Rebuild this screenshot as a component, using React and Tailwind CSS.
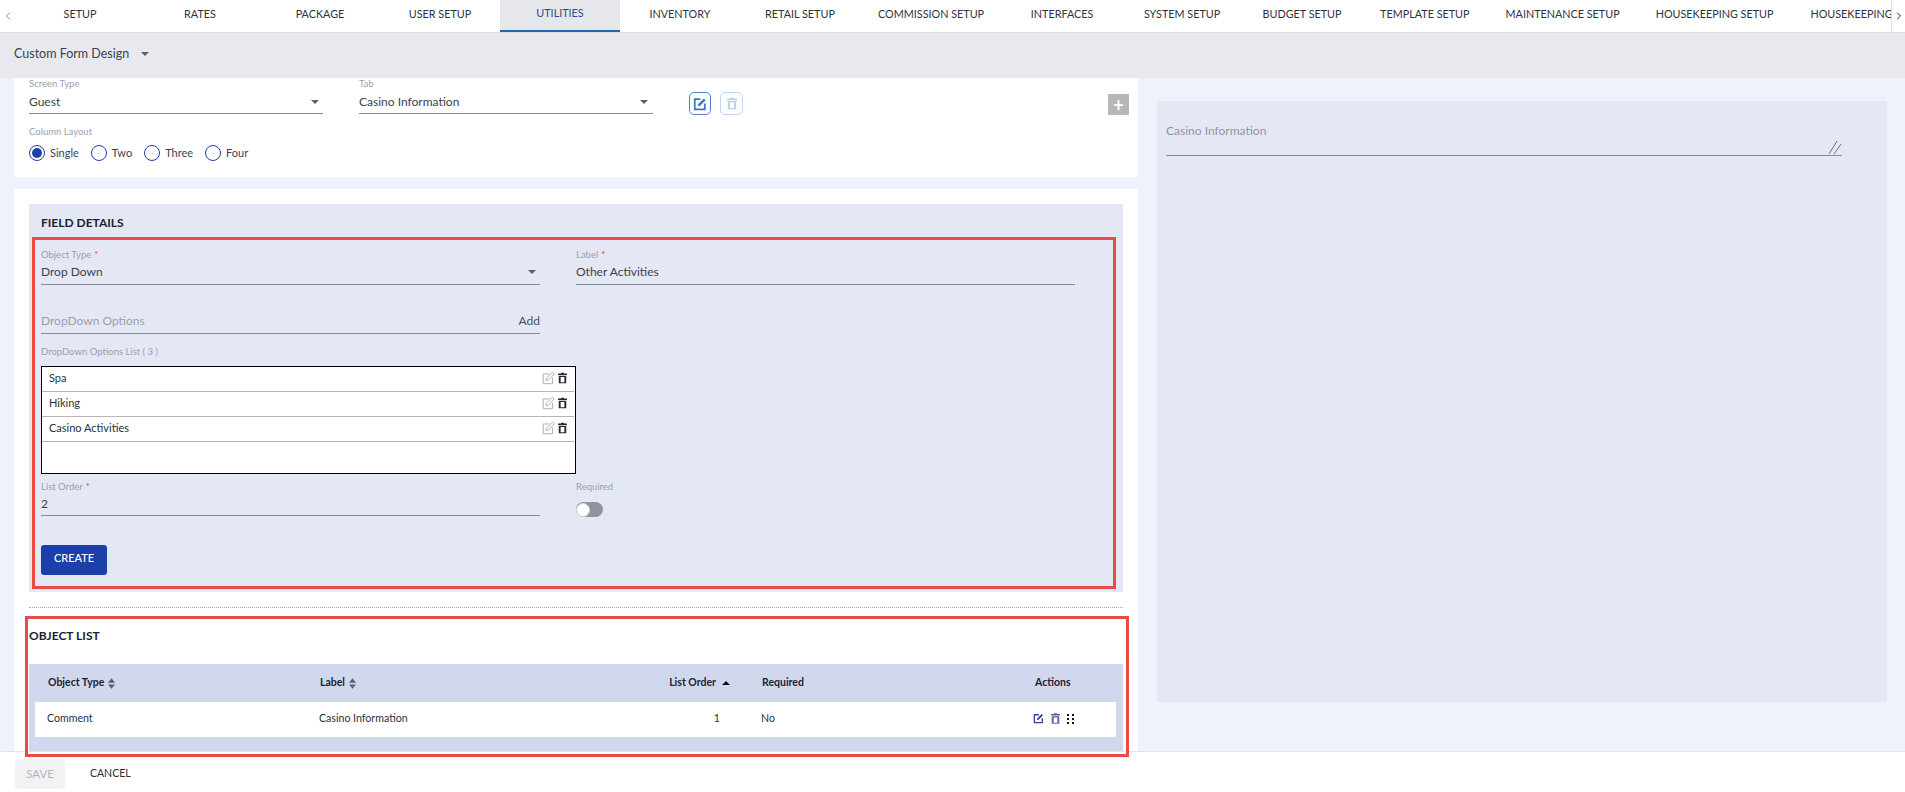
import React from 'react';
import { ChevronLeft, ChevronRight } from 'lucide-react';

const tabs = ['Setup', 'Rates', 'Package', 'User Setup', 'Utilities', 'Inventory', 'Retail Setup', 'Commission Setup', 'Interfaces', 'System Setup', 'Budget Setup', 'Template Setup', 'Maintenance Setup', 'Housekeeping Setup', 'Housekeeping'];

const Caret = ({ className }) => (
  <svg viewBox="0 0 10 5" className={className} fill="currentColor"><path d="M0 0h10L5 5z" /></svg>
);

const SortIcon = () => (
  <svg viewBox="0 0 8 12" className="w-[7px] h-[11px] text-[#5a6072]" fill="currentColor">
    <path d="M4 0l4 5H0zM0 7h8l-4 5z" />
  </svg>
);

// square with a pen, used in the action buttons
const EditSolid = ({ className }) => (
  <svg viewBox="0 0 16 16" className={className} fill="none">
    <path d="M8.5 2.5H2v11.5h11.5V7.5" stroke="currentColor" strokeWidth="2" />
    <path d="M5.5 10.5l.6-2.6L12.4 1.6l2 2-6.3 6.3z" fill="currentColor" />
  </svg>
);

const EditThin = () => (
  <svg viewBox="0 0 16 16" className="w-[13px] h-[14px] text-[#9a9dad]" fill="none" stroke="currentColor" strokeWidth="1">
    <path d="M9 3H1.5v12H13V7.5" />
    <path d="M5 11l.6-3L13 .8l2.2 2.2L8 10.4z" />
  </svg>
);

const Trash = ({ className }) => (
  <svg viewBox="0 0 12 14" className={className} fill="currentColor">
    <path d="M4 0h4v1h4v2H0V1h4z" />
    <path fillRule="evenodd" d="M1 4h10v10H1zM3.5 5.5v7h5v-7z" />
  </svg>
);

const Grip = () => (
  <svg viewBox="0 0 7 10" className="w-[7px] h-[10px] text-[#111]" fill="currentColor">
    <path d="M0 0h2v2H0zM5 0h2v2H5zM0 4h2v2H0zM5 4h2v2H5zM0 8h2v2H0zM5 8h2v2H5z" />
  </svg>
);

const Radio = ({ label, checked }) => (
  <label className="flex items-center gap-[5px] text-[11px] text-[#3c4150]">
    <span className="w-4 h-4 rounded-full border border-[#1c3faa] flex items-center justify-center">
      {checked ? (
        <span className="w-[10px] h-[10px] rounded-full bg-[#1c3faa]" />
      ) : (
        <span className="w-[1px] h-[1px] rounded-full bg-[#8a94c4]" />
      )}
    </span>
    {label}
  </label>
);

const FieldLabel = ({ children, required }) => (
  <div className="h-3 text-[9.5px] leading-3 text-[#9a9fb0]">
    {children}
    {required && <span className="text-[#e5484d] ml-[3px]">*</span>}
  </div>
);

const optionRows = ['Spa', 'Hiking', 'Casino Activities'];

const tableCols = 'grid grid-cols-[284px_321px_106px_287px_1fr] items-center';

export default function App() {
  return (
    <div className="relative h-[792px] w-[1905px] overflow-hidden flex flex-col bg-[#eff2fa] font-['Lato',sans-serif]">
      {/* Tabs */}
      <div className="h-[33px] shrink-0 bg-white border-b border-[#dcdde1] flex">
        <div className="w-5 shrink-0 flex items-center justify-center pr-[4px] text-[#8a8a8a]">
          <ChevronLeft size={12} />
        </div>
        <div className="flex-1 min-w-0 flex overflow-hidden">
          {tabs.map((t) => (
            <div
              key={t}
              className={
                t === 'Utilities'
                  ? 'shrink-0 min-w-[120px] px-[18px] h-[32px] flex items-center justify-center uppercase text-[10.8px] pb-[3px] text-[#2a4d8f] bg-[#e6e7eb] border-b-2 border-[#2f62ad] whitespace-nowrap'
                  : 'shrink-0 min-w-[120px] px-[18px] h-[32px] flex items-center justify-center uppercase text-[10.8px] pb-[3px] text-[#2f3340] whitespace-nowrap'
              }
            >
              {t}
            </div>
          ))}
        </div>
        <div className="w-[14px] shrink-0 bg-white border-l border-[#dcdde1] flex items-center justify-center text-[#222]">
          <ChevronRight size={12} />
        </div>
      </div>

      {/* Sub header */}
      <div className="h-[45px] shrink-0 bg-[#e8e9ee] flex items-center pl-[14px] pb-[3px]">
        <span className="text-[12.5px] text-[#3c4150]">Custom Form Design</span>
        <Caret className="w-2 h-1 ml-[12px] text-[#5a5f6b]" />
      </div>

      {/* Content */}
      <div className="flex-1 min-h-0 flex pl-[14px]">
        <div className="w-[1124px] shrink-0 flex flex-col">
          {/* Screen settings */}
          <div className="h-[99px] shrink-0 bg-white pl-[15px] pr-[9px]">
            <div className="flex items-start h-[36px]">
              <div className="w-[294px]">
                <FieldLabel>Screen Type</FieldLabel>
                <div className="h-[24px] border-b border-[#8a8d99] flex items-center justify-between pr-1 text-[12px] text-[#3c4150]">
                  Guest
                  <Caret className="w-2 h-1 text-[#5a5f6b]" />
                </div>
              </div>
              <div className="w-[294px] ml-[36px]">
                <FieldLabel>Tab</FieldLabel>
                <div className="h-[24px] border-b border-[#8a8d99] flex items-center justify-between pr-[5px] text-[12px] text-[#3c4150]">
                  Casino Information
                  <Caret className="w-2 h-1 text-[#5a5f6b]" />
                </div>
              </div>
              <button className="ml-[36px] mt-[14px] w-[22px] h-[23px] rounded-[5px] border border-[#4f80c9] flex items-center justify-center text-[#3f73c4]">
                <EditSolid className="w-[14px] h-[14px]" />
              </button>
              <button className="ml-[9px] mt-[14px] w-[23px] h-[23px] rounded-[5px] border border-[#c3d4ee] flex items-center justify-center text-[#bcd0ec]">
                <Trash className="w-[10px] h-[13px]" />
              </button>
              <button className="ml-auto mt-[16px] w-[21px] h-[21px] bg-[#b7b7b7] text-white text-[18px] font-bold leading-none flex items-center justify-center">
                +
              </button>
            </div>
            <div className="mt-[12px]">
              <FieldLabel>Column Layout</FieldLabel>
              <div className="flex items-center gap-[12px] mt-[7px]">
                <Radio label="Single" checked />
                <Radio label="Two" />
                <Radio label="Three" />
                <Radio label="Four" />
              </div>
            </div>
          </div>

          {/* Details card */}
          <div className="flex-1 min-h-0 mt-3 bg-white px-[15px] pt-[15px] flex flex-col">
            <div className="relative h-[388px] shrink-0 bg-[#e4e8f4] pl-3 pt-3">
              <div className="h-[14px] text-[12px] leading-[14px] font-bold text-[#1d2230]">FIELD DETAILS</div>

              <div className="mt-[19px] flex gap-[36px]">
                <div className="w-[499px]">
                  <FieldLabel required>Object Type</FieldLabel>
                  <div className="h-6 border-b border-[#8a8d99] flex items-center justify-between pr-1 pb-[2px] text-[12px] text-[#3c4150]">
                    Drop Down
                    <Caret className="w-2 h-1 text-[#5a5f6b]" />
                  </div>
                </div>
                <div className="w-[499px]">
                  <FieldLabel required>Label</FieldLabel>
                  <div className="h-6 border-b border-[#8a8d99] flex items-center pb-[2px] text-[12px] text-[#3c4150]">
                    Other Activities
                  </div>
                </div>
              </div>

              <div className="mt-6 w-[499px] h-[25px] border-b border-[#8a8d99] flex items-center justify-between text-[12px]">
                <span className="text-[#9a9fb0]">DropDown Options</span>
                <span className="text-[#4a4f5c]">Add</span>
              </div>

              <div className="mt-3">
                <FieldLabel>DropDown Options List ( 3 )</FieldLabel>
              </div>
              <div className="mt-2 w-[535px] h-[108px] border border-black bg-white pr-[1px]">
                {optionRows.map((o) => (
                  <div key={o} className="h-[25px] border-b border-[#b5b6ba] pl-[7px] pr-[7px] pb-[2px] flex items-center justify-between text-[11px] text-[#2b2f3a]">
                    {o}
                    <span className="flex items-center gap-[3px]">
                      <EditThin />
                      <Trash className="w-[9px] h-[12px] text-[#262a38]" />
                    </span>
                  </div>
                ))}
              </div>

              <div className="mt-[7px] flex gap-[36px]">
                <div className="w-[499px]">
                  <FieldLabel required>List Order</FieldLabel>
                  <div className="h-[23px] border-b border-[#8a8d99] flex items-center text-[12px] text-[#3c4150]">2</div>
                </div>
                <div>
                  <FieldLabel>Required</FieldLabel>
                  <div className="mt-[9px] w-[27px] h-[15px] rounded-full bg-[#90949f] flex items-center">
                    <span className="w-[14px] h-[14px] rounded-full bg-white border border-[#d5d6da]" />
                  </div>
                </div>
              </div>

              <button className="mt-[28px] w-[66px] h-[30px] rounded-[3px] bg-[#1c3faa] text-white text-[11px] font-medium flex items-center justify-center pb-[3px]">
                CREATE
              </button>

              {/* red annotation */}
              <div className="absolute top-[33px] left-[3px] right-[7px] bottom-[3px] border-[3px] border-[#ec4a44] pointer-events-none" />
            </div>

            <div className="mt-[15px] border-t border-dotted border-[#a8a8a8]" />

            <div className="relative flex-1 min-h-0">
              <div className="mt-[21px] h-[14px] text-[12px] leading-[14px] font-bold text-[#1d2230]">OBJECT LIST</div>

              <div className="mt-[21px] bg-[#d1d7ec] pb-[14px]">
                <div className={`${tableCols} h-[38px] ml-[6px] mr-[7px] text-[10.5px] font-bold text-[#1d2230]`}>
                  <div className="pl-[13px] flex items-center gap-[4px]">Object Type <SortIcon /></div>
                  <div className="pl-[1px] flex items-center gap-[4px]">Label <SortIcon /></div>
                  <div className="pr-[16px] flex items-center justify-end gap-[6px]">
                    List Order
                    <Caret className="w-2 h-1 rotate-180 text-[#111]" />
                  </div>
                  <div className="pl-[16px]">Required</div>
                  <div className="pl-[2px]">Actions</div>
                </div>
                <div className={`${tableCols} h-[35px] ml-[6px] mr-[7px] bg-white text-[10.6px] text-[#2b2f3a] pb-[2px]`}>
                  <div className="pl-3">Comment</div>
                  <div>Casino Information</div>
                  <div className="pr-[26px] text-right">1</div>
                  <div className="pl-[15px]">No</div>
                  <div className="flex items-center gap-[7px]">
                    <EditSolid className="w-[11px] h-[11px] text-[#34459c]" />
                    <Trash className="w-[9px] h-[11px] text-[#5560a8]" />
                    <Grip />
                  </div>
                </div>
              </div>

              {/* red annotation */}
              <div className="absolute top-[8px] -left-[4px] -right-[6px] h-[141px] border-[3px] border-[#ec4a44] z-10 pointer-events-none" />
            </div>
          </div>
        </div>

        {/* Preview */}
        <div className="flex-1 min-w-0 pl-[19px] pr-[18px] pt-[23px] pb-[49px]">
          <div className="h-full bg-[#e4e8f4] pl-[9px] pr-[45px] pt-[21px]">
            <div className="relative h-[34px] border-b border-[#8a8d99] text-[12px] text-[#9296a4]">
              Casino Information
              <svg viewBox="0 0 14 14" className="absolute right-0 bottom-[1px] w-[14px] h-[14px] text-[#555]" fill="none" stroke="currentColor" strokeWidth="0.8">
                <path d="M1 14L9 1M6 14L13 4" />
              </svg>
            </div>
          </div>
        </div>
      </div>

      {/* Footer */}
      <div className="h-[41px] shrink-0 bg-white border-t border-[#e2e3e8] flex items-center pl-[15px] pt-[4px]">
        <button className="w-[50px] h-[30px] rounded-[3px] bg-[#f2f2f4] text-[11.5px] text-[#b5b6bb]">SAVE</button>
        <span className="ml-[25px] text-[10.5px] text-[#2b2f3a]">CANCEL</span>
      </div>
    </div>
  );
}
